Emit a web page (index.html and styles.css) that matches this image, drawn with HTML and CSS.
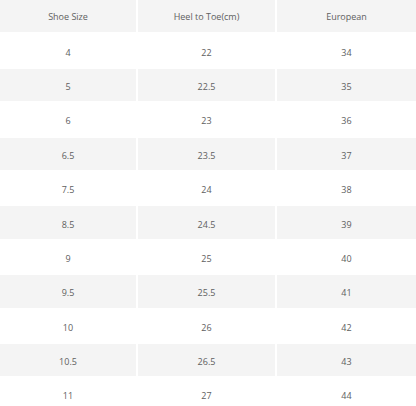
FILE: index.html
```html
<!DOCTYPE html>
<html>
<head>
<meta charset="utf-8">
<link rel="stylesheet" href="styles.css">
</head>
<body>
<div class="chart">
  <div class="cell head">Shoe Size</div><div class="cell head">Heel to Toe(cm)</div><div class="cell head">European</div>
  <div class="cell">4</div><div class="cell">22</div><div class="cell">34</div>
  <div class="cell alt">5</div><div class="cell alt">22.5</div><div class="cell alt">35</div>
  <div class="cell">6</div><div class="cell">23</div><div class="cell">36</div>
  <div class="cell alt">6.5</div><div class="cell alt">23.5</div><div class="cell alt">37</div>
  <div class="cell">7.5</div><div class="cell">24</div><div class="cell">38</div>
  <div class="cell alt">8.5</div><div class="cell alt">24.5</div><div class="cell alt">39</div>
  <div class="cell">9</div><div class="cell">25</div><div class="cell">40</div>
  <div class="cell alt">9.5</div><div class="cell alt">25.5</div><div class="cell alt">41</div>
  <div class="cell">10</div><div class="cell">26</div><div class="cell">42</div>
  <div class="cell alt">10.5</div><div class="cell alt">26.5</div><div class="cell alt">43</div>
  <div class="cell">11</div><div class="cell">27</div><div class="cell">44</div>
</div>
</body>
</html>
```
FILE: styles.css
```css
html, body {
  margin: 0;
  padding: 0;
  background: #ffffff;
}
.chart {
  display: grid;
  grid-template-columns: 136px 137px 1fr;
  grid-auto-rows: 32.4px;
  column-gap: 2px;
  row-gap: 2px;
  font-family: "Open Sans", "Liberation Sans", sans-serif;
  font-size: 9px;
  color: #606060;
}
.cell {
  display: flex;
  align-items: center;
  justify-content: center;
  padding-top: 3px;
  background: #ffffff;
}
.head {
  padding-top: 0;
}
.head, .alt {
  background: #f4f4f4;
}
```
